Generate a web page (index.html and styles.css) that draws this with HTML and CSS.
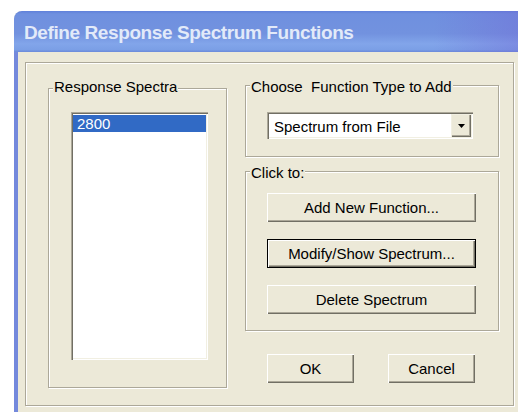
FILE: index.html
```html
<!DOCTYPE html>
<html lang="en">
<head>
<meta charset="utf-8">
<title>Define Response Spectrum Functions</title>
<link rel="stylesheet" href="styles.css">
</head>
<body>
<div class="window">
  <div class="titlebar">
    <span class="title">Define Response Spectrum Functions</span>
  </div>
  <div class="client">
    <div class="frame">
      <div class="group spectra">
        <span class="legend legend-low">Response Spectra</span>
        <div class="listbox">
          <div class="list-item selected">2800</div>
        </div>
      </div>
      <div class="side">
        <div class="group choose">
          <span class="legend">Choose&nbsp; Function Type to Add</span>
          <div class="combo">
            <span class="combo-text">Spectrum from File</span>
            <span class="combo-arrow">
              <svg width="7" height="4" viewBox="0 0 7 4"><polygon points="0,0 7,0 3.5,4" fill="#000"/></svg>
            </span>
          </div>
        </div>
        <div class="group click">
          <span class="legend">Click to:</span>
          <div class="btn-stack">
            <button class="btn wide">Add New Function...</button>
            <button class="btn wide default">Modify/Show Spectrum...</button>
            <button class="btn wide">Delete Spectrum</button>
          </div>
        </div>
        <div class="actions">
          <button class="btn small">OK</button>
          <button class="btn small">Cancel</button>
        </div>
      </div>
    </div>
  </div>
</div>
</body>
</html>
```
FILE: styles.css
```css
html, body {
  margin: 0;
  height: 100%;
}

body {
  background: #fff;
  overflow: hidden;
  font-family: "Liberation Sans", Arial, sans-serif;
  font-size: 15px;
  color: #000;
}

/* dialog window */
.window {
  margin: 11px 0 0 14px;
  width: 512px;
  height: 420px;
  display: flex;
  flex-direction: column;
  background: #ece9d8;
  border-radius: 8px 0 0 0;
  overflow: hidden;
}

.titlebar {
  flex: none;
  height: 41px;
  display: flex;
  align-items: center;
  padding-left: 10px;
  background:
    linear-gradient(to right, rgba(120, 110, 220, 0) 82%, rgba(115, 105, 215, 0.45) 100%),
    linear-gradient(to bottom, #5f80da 0, #6f90df 3px, #7292df 55%, #82a5ea 80%, #7b9fe6 94%, #6b8ada 100%);
}

.title {
  font-weight: bold;
  font-size: 19px;
  letter-spacing: -0.4px;
  color: #e2eaf9;
  padding-top: 2px;
}

.client {
  flex: 1;
  border-left: 4px solid #7489dc;
  padding: 10px 0 0 7px;
}

/* etched frames */
.frame,
.group {
  box-sizing: border-box;
  border: 1px solid #aca899;
  box-shadow: inset 1px 1px #fff, 1px 1px #fff;
}

.frame {
  width: 489px;
  height: 344px;
  display: flex;
  align-items: flex-start;
}

.group {
  display: flex;
  flex-direction: column;
  align-items: flex-start;
}

.legend {
  height: 17px;
  line-height: 17px;
  margin: -8px 0 0 4px;
  padding: 0 1px;
  background: #ece9d8;
  white-space: nowrap;
}

.legend-low {
  margin-top: -11px;
}

/* left group: list of spectra */
.spectra {
  margin: 25px 0 0 22px;
  width: 179px;
  height: 300px;
}

.listbox {
  box-sizing: border-box;
  margin: 17px 0 0 22px;
  width: 137px;
  height: 248px;
  padding: 3px 2px 2px 2px;
  background: #fff;
  box-shadow: inset 1px 1px #aca899, inset 2px 2px #716f64, inset -1px -1px #fff, inset -2px -2px #f1efe2;
}

.list-item {
  height: 17px;
  line-height: 17px;
  padding-left: 4px;
}

.list-item.selected {
  background: #316ac5;
  color: #fff;
}

/* right column */
.side {
  margin: 22px 0 0 18px;
  width: 254px;
  display: flex;
  flex-direction: column;
}

.choose {
  height: 72px;
}

.combo {
  box-sizing: border-box;
  margin: 17px 0 0 21px;
  width: 206px;
  height: 27px;
  padding: 2px;
  display: flex;
  background: #fff;
  box-shadow: inset 1px 1px #aca899, inset 2px 2px #716f64, inset -1px -1px #fff, inset -2px -2px #f1efe2;
}

.combo-text {
  flex: 1;
  line-height: 23px;
  padding: 1px 0 0 5px;
}

.combo-arrow {
  width: 20px;
  display: flex;
  align-items: center;
  justify-content: center;
  padding-top: 1px;
  box-sizing: border-box;
  background: #ece9d8;
  box-shadow: inset 1px 1px #f1efe2, inset -1px -1px #716f64, inset -2px -2px #aca899;
}

.click {
  margin-top: 14px;
  height: 160px;
}

.btn-stack {
  margin: 12px 0 0 21px;
  display: flex;
  flex-direction: column;
  gap: 17px;
}

/* raised push buttons */
.btn {
  box-sizing: border-box;
  height: 29px;
  padding: 0;
  border: 0;
  background: #ece9d8;
  font: inherit;
  color: #000;
  box-shadow: inset 1px 1px #fff, inset -1px -1px #716f64, inset -2px -2px #aca899;
}

.btn.wide {
  width: 209px;
}

.btn.default {
  border: 1px solid #000;
}

.actions {
  margin: 23px 0 0 22px;
  display: flex;
  gap: 34px;
}

.btn.small {
  width: 87px;
}
```
